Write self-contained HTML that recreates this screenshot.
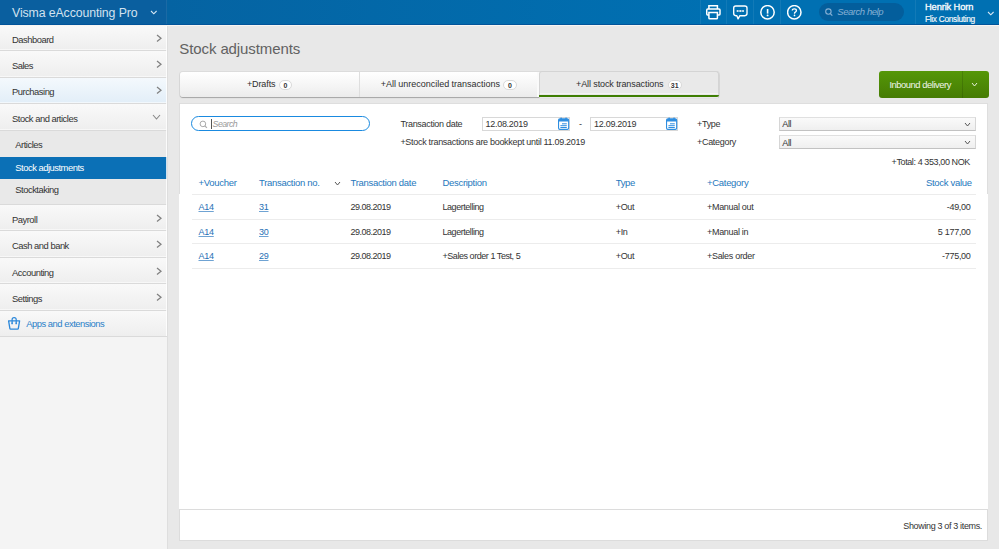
<!DOCTYPE html>
<html><head><meta charset="utf-8"><style>
*{box-sizing:border-box;margin:0;padding:0}
html,body{width:999px;height:549px;overflow:hidden}
body{font-family:"Liberation Sans",sans-serif;background:#e8e8e8;color:#333;position:relative}
.t{position:absolute;white-space:nowrap}
.b{position:absolute}
</style></head><body>
<div class="b" style="left:0px;top:0px;width:167px;height:24px;background:#0a5f9f"></div>
<div class="b" style="left:167px;top:0px;width:832px;height:24px;background:linear-gradient(to right,#0563a2,#0070b2 65%,#0070b2)"></div>
<div class="b" style="left:0px;top:24px;width:999px;height:1px;background:#02549a"></div>
<div class="b" style="left:0px;top:25px;width:999px;height:1px;background:#f7f5f2"></div>
<div class="t" style="left:12.00px;top:7.09px;font-size:12.3px;line-height:12.3px;color:#d2e2ef;letter-spacing:-0.1px;font-weight:normal;font-style:normal;">Visma eAccounting Pro</div>
<svg class="b" style="left:149.20px;top:9.10px" width="9.6" height="6.8" viewBox="0 0 9.6 6.8"><polyline points="2,2 4.8,4.8 7.6,2" fill="none" stroke="#d6e6f3" stroke-width="1.1"/></svg>
<div class="b" style="left:166px;top:0px;width:1px;height:24px;background:rgba(255,255,255,.07)"></div>
<div class="b" style="left:700px;top:0px;width:1px;height:24px;background:rgba(255,255,255,.07)"></div>
<div class="b" style="left:726px;top:0px;width:1px;height:24px;background:rgba(255,255,255,.07)"></div>
<div class="b" style="left:753px;top:0px;width:1px;height:24px;background:rgba(255,255,255,.07)"></div>
<div class="b" style="left:780px;top:0px;width:1px;height:24px;background:rgba(255,255,255,.07)"></div>
<div class="b" style="left:915px;top:0px;width:1px;height:24px;background:rgba(255,255,255,.07)"></div>
<svg class="b" style="left:705px;top:4px" width="17" height="17" viewBox="0 0 17 17">
 <path d="M3.9 5 V1.85 H12.4 V5" fill="none" stroke="#fff" stroke-width="1.5"/>
 <path d="M3.9 10.9 H2.6 Q1.75 10.9 1.75 10 V6 Q1.75 5.1 2.75 5.1 H14 Q15 5.1 15 6 V10 Q15 10.9 14.2 10.9 H12.4" fill="none" stroke="#fff" stroke-width="1.5"/>
 <path d="M3.9 8.4 H12.4 V14 Q12.4 14.75 11.6 14.75 H4.7 Q3.9 14.75 3.9 14 Z" fill="none" stroke="#fff" stroke-width="1.5"/>
</svg>
<svg class="b" style="left:732px;top:4px" width="17" height="17" viewBox="0 0 17 17">
 <path d="M3.8 1.95 H12.8 Q15 1.95 15 4.1 V9.6 Q15 11.7 12.8 11.7 H7.9 L6.1 14.9 L4.9 11.7 H3.8 Q1.7 11.7 1.7 9.6 V4.1 Q1.7 1.95 3.8 1.95 Z" fill="none" stroke="#fff" stroke-width="1.35" stroke-linejoin="round"/>
 <circle cx="5.5" cy="7" r="1" fill="#fff" opacity=".85"/><circle cx="8.3" cy="7" r="1" fill="#fff" opacity=".85"/><circle cx="11.1" cy="7" r="1" fill="#fff" opacity=".85"/>
 <path d="M5.5 7 H11.1" stroke="#fff" stroke-width=".9" opacity=".7"/>
</svg>
<svg class="b" style="left:760px;top:5px" width="16" height="16" viewBox="0 0 16 16">
 <circle cx="7.5" cy="7.3" r="6.7" fill="none" stroke="#fff" stroke-width="1.5"/>
 <path d="M7.6 4 V8.6" stroke="#fff" stroke-width="1.6"/><circle cx="7.6" cy="10.4" r=".95" fill="#fff"/>
</svg>
<svg class="b" style="left:787px;top:5px" width="16" height="16" viewBox="0 0 16 16">
 <circle cx="7.3" cy="7.3" r="6.7" fill="none" stroke="#fff" stroke-width="1.5"/>
 <path d="M5.3 5.6 Q5.3 3.9 7.3 3.9 Q9.4 3.9 9.4 5.6 Q9.4 6.6 8.3 7.2 Q7.5 7.6 7.5 8.7" fill="none" stroke="#fff" stroke-width="1.3"/><circle cx="7.5" cy="10.4" r=".85" fill="#fff"/>
</svg>
<div class="b" style="left:818.5px;top:3px;width:85.5px;height:18px;background:#035e9c;border-radius:9px"></div>
<svg class="b" style="left:824px;top:7px" width="10" height="10" viewBox="0 0 10 10"><circle cx="4.4" cy="4.6" r="2.7" fill="none" stroke="#86b0d4" stroke-width="1.1"/><path d="M6.3 6.6 L8.3 8.6" stroke="#86b0d4" stroke-width="1.2"/></svg>
<div class="t" style="left:837.30px;top:7.46px;font-size:9.5px;line-height:9.5px;color:#86b0d4;letter-spacing:-0.45px;font-weight:normal;font-style:italic;">Search help</div>
<div class="t" style="left:925.00px;top:3.23px;font-size:9.3px;line-height:9.3px;color:#fff;letter-spacing:-0.12px;font-weight:normal;font-style:normal;-webkit-text-stroke:0.3px #fff">Henrik Horn</div>
<div class="t" style="left:925.00px;top:14.77px;font-size:8.3px;line-height:8.3px;color:#f4f8fb;letter-spacing:-0.3px;font-weight:normal;font-style:normal;-webkit-text-stroke:0.15px #fff">Flix Consluting</div>
<svg class="b" style="left:985.70px;top:10.10px" width="9.6" height="6.8" viewBox="0 0 9.6 6.8"><polyline points="2,2 4.8,4.8 7.6,2" fill="none" stroke="#d6e6f3" stroke-width="1.1"/></svg>
<div class="b" style="left:0px;top:26px;width:167px;height:523px;background:#f4f4f4"></div>
<div class="b" style="left:167px;top:26px;width:1px;height:523px;background:#dedede"></div>
<div class="b" style="left:0px;top:26px;width:167px;height:24px;background:linear-gradient(#f9f9f9,#eeeeee)"></div>
<div class="b" style="left:0px;top:49px;width:166px;height:1px;background:rgba(255,255,255,.55)"></div>
<div class="b" style="left:0px;top:50px;width:167px;height:1px;background:#dadada"></div>
<div class="t" style="left:12.00px;top:34.74px;font-size:9.4px;line-height:9.4px;color:#333;letter-spacing:-0.48px;font-weight:normal;font-style:normal;">Dashboard</div>
<svg class="b" style="left:155.00px;top:33.10px" width="8" height="10.4" viewBox="0 0 8 10.4"><polyline points="2,2 6,5.2 2,8.4" fill="none" stroke="#808080" stroke-width="1.25"/></svg>
<div class="b" style="left:0px;top:51px;width:167px;height:26px;background:linear-gradient(#f9f9f9,#eeeeee)"></div>
<div class="b" style="left:0px;top:76px;width:166px;height:1px;background:rgba(255,255,255,.55)"></div>
<div class="b" style="left:0px;top:77px;width:167px;height:1px;background:#dadada"></div>
<div class="t" style="left:12.00px;top:60.94px;font-size:9.4px;line-height:9.4px;color:#333;letter-spacing:-0.48px;font-weight:normal;font-style:normal;">Sales</div>
<svg class="b" style="left:155.00px;top:59.30px" width="8" height="10.4" viewBox="0 0 8 10.4"><polyline points="2,2 6,5.2 2,8.4" fill="none" stroke="#808080" stroke-width="1.25"/></svg>
<div class="b" style="left:0px;top:78px;width:167px;height:25px;background:linear-gradient(#f4f9fd,#e2eef8)"></div>
<div class="b" style="left:0px;top:102px;width:166px;height:1px;background:rgba(255,255,255,.55)"></div>
<div class="b" style="left:0px;top:103px;width:167px;height:1px;background:#dadada"></div>
<div class="t" style="left:12.00px;top:86.74px;font-size:9.4px;line-height:9.4px;color:#333;letter-spacing:-0.48px;font-weight:normal;font-style:normal;">Purchasing</div>
<svg class="b" style="left:155.00px;top:85.10px" width="8" height="10.4" viewBox="0 0 8 10.4"><polyline points="2,2 6,5.2 2,8.4" fill="none" stroke="#808080" stroke-width="1.25"/></svg>
<div class="b" style="left:0px;top:104px;width:167px;height:26px;background:linear-gradient(#f9f9f9,#eeeeee)"></div>
<div class="b" style="left:0px;top:129px;width:166px;height:1px;background:rgba(255,255,255,.55)"></div>
<div class="b" style="left:0px;top:130px;width:167px;height:1px;background:#dadada"></div>
<div class="t" style="left:12.00px;top:113.74px;font-size:9.4px;line-height:9.4px;color:#333;letter-spacing:-0.48px;font-weight:normal;font-style:normal;">Stock and articles</div>
<svg class="b" style="left:151.30px;top:113.00px" width="11" height="8" viewBox="0 0 11 8"><polyline points="2,2 5.5,6 9,2" fill="none" stroke="#888" stroke-width="1.1"/></svg>
<div class="b" style="left:0px;top:205px;width:167px;height:25px;background:linear-gradient(#f9f9f9,#eeeeee)"></div>
<div class="b" style="left:0px;top:229px;width:166px;height:1px;background:rgba(255,255,255,.55)"></div>
<div class="b" style="left:0px;top:230px;width:167px;height:1px;background:#dadada"></div>
<div class="t" style="left:12.00px;top:214.74px;font-size:9.4px;line-height:9.4px;color:#333;letter-spacing:-0.48px;font-weight:normal;font-style:normal;">Payroll</div>
<svg class="b" style="left:155.00px;top:213.10px" width="8" height="10.4" viewBox="0 0 8 10.4"><polyline points="2,2 6,5.2 2,8.4" fill="none" stroke="#808080" stroke-width="1.25"/></svg>
<div class="b" style="left:0px;top:231px;width:167px;height:26px;background:linear-gradient(#f9f9f9,#eeeeee)"></div>
<div class="b" style="left:0px;top:256px;width:166px;height:1px;background:rgba(255,255,255,.55)"></div>
<div class="b" style="left:0px;top:257px;width:167px;height:1px;background:#dadada"></div>
<div class="t" style="left:12.00px;top:240.74px;font-size:9.4px;line-height:9.4px;color:#333;letter-spacing:-0.48px;font-weight:normal;font-style:normal;">Cash and bank</div>
<svg class="b" style="left:155.00px;top:239.10px" width="8" height="10.4" viewBox="0 0 8 10.4"><polyline points="2,2 6,5.2 2,8.4" fill="none" stroke="#808080" stroke-width="1.25"/></svg>
<div class="b" style="left:0px;top:258px;width:167px;height:25px;background:linear-gradient(#f9f9f9,#eeeeee)"></div>
<div class="b" style="left:0px;top:282px;width:166px;height:1px;background:rgba(255,255,255,.55)"></div>
<div class="b" style="left:0px;top:283px;width:167px;height:1px;background:#dadada"></div>
<div class="t" style="left:12.00px;top:267.74px;font-size:9.4px;line-height:9.4px;color:#333;letter-spacing:-0.48px;font-weight:normal;font-style:normal;">Accounting</div>
<svg class="b" style="left:155.00px;top:266.10px" width="8" height="10.4" viewBox="0 0 8 10.4"><polyline points="2,2 6,5.2 2,8.4" fill="none" stroke="#808080" stroke-width="1.25"/></svg>
<div class="b" style="left:0px;top:284px;width:167px;height:26px;background:linear-gradient(#f9f9f9,#eeeeee)"></div>
<div class="b" style="left:0px;top:309px;width:166px;height:1px;background:rgba(255,255,255,.55)"></div>
<div class="b" style="left:0px;top:310px;width:167px;height:1px;background:#dadada"></div>
<div class="t" style="left:12.00px;top:293.74px;font-size:9.4px;line-height:9.4px;color:#333;letter-spacing:-0.48px;font-weight:normal;font-style:normal;">Settings</div>
<svg class="b" style="left:155.00px;top:292.10px" width="8" height="10.4" viewBox="0 0 8 10.4"><polyline points="2,2 6,5.2 2,8.4" fill="none" stroke="#808080" stroke-width="1.25"/></svg>
<div class="b" style="left:0px;top:131px;width:167px;height:73px;background:#e9e9e9"></div>
<div class="b" style="left:0px;top:204px;width:167px;height:1px;background:#dadada"></div>
<div class="b" style="left:0px;top:157px;width:167px;height:22px;background:#0b70b6"></div>
<div class="t" style="left:15.30px;top:140.24px;font-size:9.4px;line-height:9.4px;color:#333;letter-spacing:-0.48px;font-weight:normal;font-style:normal;">Articles</div>
<div class="t" style="left:15.30px;top:162.74px;font-size:9.4px;line-height:9.4px;color:#fff;letter-spacing:-0.48px;font-weight:normal;font-style:normal;">Stock adjustments</div>
<div class="t" style="left:15.30px;top:185.24px;font-size:9.4px;line-height:9.4px;color:#333;letter-spacing:-0.48px;font-weight:normal;font-style:normal;">Stocktaking</div>
<div class="b" style="left:0px;top:311px;width:167px;height:25px;background:linear-gradient(#f9f9f9,#eeeeee)"></div>
<div class="b" style="left:0px;top:336px;width:167px;height:1px;background:#dadada"></div>
<div class="b" style="left:166px;top:26px;width:1px;height:310px;background:rgba(255,255,255,.8)"></div>
<svg class="b" style="left:4px;top:312px" width="20" height="22" viewBox="0 0 20 22"><path d="M4.6 8.85 H15.6 L14.3 16.6 Q14.2 17.1 13.6 17.1 H6.6 Q6 17.1 5.9 16.6 Z" fill="none" stroke="#2a87da" stroke-width="1.3" stroke-linejoin="round"/><path d="M8.1 11.3 V7.6 A2.05 2.05 0 0 1 12.2 7.6 V11.3" fill="none" stroke="#2a87da" stroke-width="1.2"/><circle cx="8.1" cy="11.4" r=".85" fill="#2a87da"/><circle cx="12.2" cy="11.4" r=".85" fill="#2a87da"/></svg>
<div class="t" style="left:26.30px;top:319.14px;font-size:9.4px;line-height:9.4px;color:#2a80c8;letter-spacing:-0.48px;font-weight:normal;font-style:normal;">Apps and extensions</div>
<div class="t" style="left:179.30px;top:41.30px;font-size:15px;line-height:15px;color:#626262;letter-spacing:-0.1px;font-weight:normal;font-style:normal;">Stock adjustments</div>
<div class="b" style="left:179.5px;top:71.5px;width:539px;height:25.5px;background:linear-gradient(#ffffff,#f4f4f4 60%,#ececec);border-radius:3px;box-shadow:0 0 0 1px rgba(0,0,0,.05),0 1px 1px rgba(0,0,0,.25)"></div>
<div class="b" style="left:359px;top:72px;width:1px;height:25px;background:#dedede"></div>
<div class="b" style="left:537px;top:72px;width:1.5px;height:25px;background:#fafafa"></div>
<div class="b" style="left:538.5px;top:71px;width:180px;height:26.5px;background:#e9e9e9;border:1px solid #d4d4d4;border-bottom:none;border-radius:3px 3px 0 0"></div>
<div class="b" style="left:539.5px;top:92.5px;width:178px;height:1px;background:#f3f3f3"></div>
<div class="b" style="left:538.5px;top:94.7px;width:180px;height:2.5px;background:#3f7e03;border-radius:0 0 3px 0"></div>
<div class="t" style="left:246.90px;top:80.28px;font-size:9px;line-height:9px;color:#2e2e2e;letter-spacing:-0.1px;font-weight:normal;font-style:normal;">+Drafts</div>
<div class="b" style="left:278.7px;top:79.6px;width:13.6px;height:10px;border:1px solid #d9d9d9;border-radius:5px;background:#fff"></div>
<div class="t" style="left:285.50px;top:81.77px;font-size:7px;line-height:7px;color:#333;letter-spacing:0px;font-weight:bold;font-style:normal;transform:translateX(-50%)">0</div>
<div class="t" style="left:380.70px;top:80.28px;font-size:9px;line-height:9px;color:#2e2e2e;letter-spacing:-0.02px;font-weight:normal;font-style:normal;">+All unreconciled transactions</div>
<div class="b" style="left:503px;top:79.6px;width:14px;height:10px;border:1px solid #d9d9d9;border-radius:5px;background:#fff"></div>
<div class="t" style="left:510.00px;top:81.77px;font-size:7px;line-height:7px;color:#333;letter-spacing:0px;font-weight:bold;font-style:normal;transform:translateX(-50%)">0</div>
<div class="t" style="left:576.00px;top:80.28px;font-size:9px;line-height:9px;color:#2e2e2e;letter-spacing:-0.1px;font-weight:normal;font-style:normal;">+All stock transactions</div>
<div class="b" style="left:668px;top:79.6px;width:13.5px;height:10px;border:1px solid #d9d9d9;border-radius:5px;background:#fff"></div>
<div class="t" style="left:674.75px;top:81.77px;font-size:7px;line-height:7px;color:#333;letter-spacing:0px;font-weight:bold;font-style:normal;transform:translateX(-50%)">31</div>
<div class="b" style="left:879px;top:71px;width:110px;height:26.5px;background:linear-gradient(#559708,#467c04);border-radius:3px"></div>
<div class="b" style="left:961.5px;top:71px;width:1px;height:26.5px;background:rgba(0,0,0,.13)"></div>
<div class="t" style="left:889.40px;top:80.14px;font-size:9.4px;line-height:9.4px;color:#f0f6ea;letter-spacing:-0.45px;font-weight:normal;font-style:normal;">Inbound delivery</div>
<svg class="b" style="left:970.20px;top:81.20px" width="9" height="7" viewBox="0 0 9 7"><polyline points="2,2 4.5,5 7,2" fill="none" stroke="#e6f0da" stroke-width="1.0"/></svg>
<div class="b" style="left:179px;top:103px;width:809.4px;height:406px;background:#fff"></div>
<div class="b" style="left:179px;top:103px;width:809.4px;height:91px;border:1px solid #dedede;border-bottom:none"></div>
<div class="b" style="left:179px;top:509px;width:809.4px;height:31.5px;background:#fff;border:1px solid #dcdcdc"></div>
<div class="b" style="left:191.3px;top:116.2px;width:178.5px;height:14.7px;border:1.6px solid #1a8ae0;border-radius:8px;background:#fff"></div>
<svg class="b" style="left:199px;top:119.5px" width="9" height="9" viewBox="0 0 9 9"><circle cx="3.9" cy="3.9" r="2.8" fill="none" stroke="#aaa" stroke-width="1"/><path d="M5.9 5.9 L7.9 7.9" stroke="#aaa" stroke-width="1.1"/></svg>
<div class="b" style="left:210.5px;top:119px;width:1px;height:9.8px;background:#555"></div>
<div class="t" style="left:212.60px;top:120.25px;font-size:8.8px;line-height:8.8px;color:#9a9a9a;letter-spacing:-0.55px;font-weight:normal;font-style:italic;">Search</div>
<div class="t" style="left:400.40px;top:119.68px;font-size:9px;line-height:9px;color:#333;letter-spacing:-0.3px;font-weight:normal;font-style:normal;">Transaction date</div>
<div class="b" style="left:481.5px;top:116.5px;width:88px;height:14px;border:1px solid #d8d8d8;background:#fff"></div>
<div class="t" style="left:485.60px;top:119.68px;font-size:9px;line-height:9px;color:#333;letter-spacing:-0.3px;font-weight:normal;font-style:normal;">12.08.2019</div>
<svg class="b" style="left:557.6px;top:117.3px" width="12" height="13" viewBox="0 0 12 13"><rect x="0.55" y="1.9" width="10.1" height="10.5" rx="1.3" fill="#fff" stroke="#2f8ee0" stroke-width="1.1"/><path d="M0.55 4.6 V3.2 Q0.55 1.9 1.85 1.9 H9.35 Q10.65 1.9 10.65 3.2 V4.6 Z" fill="#2f8ee0"/><rect x="2.4" y="0.5" width="1.5" height="2.6" rx=".5" fill="#2f8ee0"/><rect x="7.3" y="0.5" width="1.5" height="2.6" rx=".5" fill="#2f8ee0"/><path d="M4 6.8 H8.8 M2.4 8.7 H8.8 M2.4 10.5 H8.8" stroke="#2f8ee0" stroke-width="1"/></svg>
<div class="t" style="left:579.00px;top:119.68px;font-size:9px;line-height:9px;color:#333;letter-spacing:0px;font-weight:normal;font-style:normal;">-</div>
<div class="b" style="left:590px;top:116.5px;width:88px;height:14px;border:1px solid #d8d8d8;background:#fff"></div>
<div class="t" style="left:594.10px;top:119.68px;font-size:9px;line-height:9px;color:#333;letter-spacing:-0.3px;font-weight:normal;font-style:normal;">12.09.2019</div>
<svg class="b" style="left:666.1px;top:117.3px" width="12" height="13" viewBox="0 0 12 13"><rect x="0.55" y="1.9" width="10.1" height="10.5" rx="1.3" fill="#fff" stroke="#2f8ee0" stroke-width="1.1"/><path d="M0.55 4.6 V3.2 Q0.55 1.9 1.85 1.9 H9.35 Q10.65 1.9 10.65 3.2 V4.6 Z" fill="#2f8ee0"/><rect x="2.4" y="0.5" width="1.5" height="2.6" rx=".5" fill="#2f8ee0"/><rect x="7.3" y="0.5" width="1.5" height="2.6" rx=".5" fill="#2f8ee0"/><path d="M4 6.8 H8.8 M2.4 8.7 H8.8 M2.4 10.5 H8.8" stroke="#2f8ee0" stroke-width="1"/></svg>
<div class="t" style="left:400.40px;top:138.48px;font-size:9px;line-height:9px;color:#333;letter-spacing:-0.3px;font-weight:normal;font-style:normal;">+Stock transactions are bookkept until 11.09.2019</div>
<div class="t" style="left:697.00px;top:119.68px;font-size:9px;line-height:9px;color:#333;letter-spacing:-0.3px;font-weight:normal;font-style:normal;">+Type</div>
<div class="t" style="left:697.00px;top:138.48px;font-size:9px;line-height:9px;color:#333;letter-spacing:-0.3px;font-weight:normal;font-style:normal;">+Category</div>
<div class="b" style="left:779px;top:117px;width:196.5px;height:13.8px;border:1px solid #d6d6d6;border-bottom-color:#c2c2c2;border-top-color:#e0e0e0;background:linear-gradient(#fafafa,#efefef)"></div>
<div class="t" style="left:782.20px;top:120.48px;font-size:9px;line-height:9px;color:#333;letter-spacing:-0.3px;font-weight:normal;font-style:normal;">All</div>
<svg class="b" style="left:962.50px;top:120.80px" width="9" height="7" viewBox="0 0 9 7"><polyline points="2,2 4.5,5 7,2" fill="none" stroke="#555" stroke-width="1.0"/></svg>
<div class="b" style="left:779px;top:135.3px;width:196.5px;height:13.8px;border:1px solid #d6d6d6;border-bottom-color:#c2c2c2;border-top-color:#e0e0e0;background:linear-gradient(#fafafa,#efefef)"></div>
<div class="t" style="left:782.20px;top:138.78px;font-size:9px;line-height:9px;color:#333;letter-spacing:-0.3px;font-weight:normal;font-style:normal;">All</div>
<svg class="b" style="left:962.50px;top:139.10px" width="9" height="7" viewBox="0 0 9 7"><polyline points="2,2 4.5,5 7,2" fill="none" stroke="#555" stroke-width="1.0"/></svg>
<div class="t" style="right:29.10px;top:157.68px;font-size:9px;line-height:9px;color:#333;letter-spacing:-0.4px;font-weight:normal;font-style:normal;">+Total: 4 353,00 NOK</div>
<div class="t" style="left:198.50px;top:178.46px;font-size:9.5px;line-height:9.5px;color:#2678bd;letter-spacing:-0.3px;font-weight:normal;font-style:normal;">+Voucher</div>
<div class="t" style="left:259.00px;top:178.46px;font-size:9.5px;line-height:9.5px;color:#2678bd;letter-spacing:-0.3px;font-weight:normal;font-style:normal;">Transaction no.</div>
<div class="t" style="left:350.50px;top:178.46px;font-size:9.5px;line-height:9.5px;color:#2678bd;letter-spacing:-0.3px;font-weight:normal;font-style:normal;">Transaction date</div>
<div class="t" style="left:442.50px;top:178.46px;font-size:9.5px;line-height:9.5px;color:#2678bd;letter-spacing:-0.3px;font-weight:normal;font-style:normal;">Description</div>
<div class="t" style="left:615.70px;top:178.46px;font-size:9.5px;line-height:9.5px;color:#2678bd;letter-spacing:-0.3px;font-weight:normal;font-style:normal;">Type</div>
<div class="t" style="left:707.00px;top:178.46px;font-size:9.5px;line-height:9.5px;color:#2678bd;letter-spacing:-0.3px;font-weight:normal;font-style:normal;">+Category</div>
<div class="t" style="right:27.30px;top:178.46px;font-size:9.5px;line-height:9.5px;color:#2678bd;letter-spacing:-0.3px;font-weight:normal;font-style:normal;">Stock value</div>
<svg class="b" style="left:332.50px;top:179.50px" width="9" height="7" viewBox="0 0 9 7"><polyline points="2,2 4.5,5 7,2" fill="none" stroke="#555" stroke-width="1.0"/></svg>
<div class="b" style="left:192px;top:193.5px;width:784px;height:1px;background:#ececec"></div>
<div class="b" style="left:192px;top:218.5px;width:784px;height:1px;background:#ececec"></div>
<div class="b" style="left:192px;top:243px;width:784px;height:1px;background:#ececec"></div>
<div class="b" style="left:192px;top:267.5px;width:784px;height:1px;background:#ececec"></div>
<div class="t" style="left:198.50px;top:203.08px;font-size:9px;line-height:9px;color:#1f6fb5;letter-spacing:-0.25px;font-weight:normal;font-style:normal;text-decoration:underline;text-decoration-color:#6fa3d3;text-underline-offset:1px">A14</div>
<div class="t" style="left:259.00px;top:203.08px;font-size:9px;line-height:9px;color:#1f6fb5;letter-spacing:-0.25px;font-weight:normal;font-style:normal;text-decoration:underline;text-decoration-color:#6fa3d3;text-underline-offset:1px">31</div>
<div class="t" style="left:350.50px;top:203.08px;font-size:9px;line-height:9px;color:#333;letter-spacing:-0.5px;font-weight:normal;font-style:normal;">29.08.2019</div>
<div class="t" style="left:442.50px;top:203.08px;font-size:9px;line-height:9px;color:#333;letter-spacing:-0.45px;font-weight:normal;font-style:normal;">Lagertelling</div>
<div class="t" style="left:615.70px;top:203.08px;font-size:9px;line-height:9px;color:#333;letter-spacing:-0.3px;font-weight:normal;font-style:normal;">+Out</div>
<div class="t" style="left:707.00px;top:203.08px;font-size:9px;line-height:9px;color:#333;letter-spacing:-0.3px;font-weight:normal;font-style:normal;">+Manual out</div>
<div class="t" style="right:28.50px;top:203.08px;font-size:9px;line-height:9px;color:#333;letter-spacing:-0.3px;font-weight:normal;font-style:normal;">-49,00</div>
<div class="t" style="left:198.50px;top:227.58px;font-size:9px;line-height:9px;color:#1f6fb5;letter-spacing:-0.25px;font-weight:normal;font-style:normal;text-decoration:underline;text-decoration-color:#6fa3d3;text-underline-offset:1px">A14</div>
<div class="t" style="left:259.00px;top:227.58px;font-size:9px;line-height:9px;color:#1f6fb5;letter-spacing:-0.25px;font-weight:normal;font-style:normal;text-decoration:underline;text-decoration-color:#6fa3d3;text-underline-offset:1px">30</div>
<div class="t" style="left:350.50px;top:227.58px;font-size:9px;line-height:9px;color:#333;letter-spacing:-0.5px;font-weight:normal;font-style:normal;">29.08.2019</div>
<div class="t" style="left:442.50px;top:227.58px;font-size:9px;line-height:9px;color:#333;letter-spacing:-0.45px;font-weight:normal;font-style:normal;">Lagertelling</div>
<div class="t" style="left:615.70px;top:227.58px;font-size:9px;line-height:9px;color:#333;letter-spacing:-0.3px;font-weight:normal;font-style:normal;">+In</div>
<div class="t" style="left:707.00px;top:227.58px;font-size:9px;line-height:9px;color:#333;letter-spacing:-0.3px;font-weight:normal;font-style:normal;">+Manual in</div>
<div class="t" style="right:28.50px;top:227.58px;font-size:9px;line-height:9px;color:#333;letter-spacing:-0.3px;font-weight:normal;font-style:normal;">5 177,00</div>
<div class="t" style="left:198.50px;top:252.08px;font-size:9px;line-height:9px;color:#1f6fb5;letter-spacing:-0.25px;font-weight:normal;font-style:normal;text-decoration:underline;text-decoration-color:#6fa3d3;text-underline-offset:1px">A14</div>
<div class="t" style="left:259.00px;top:252.08px;font-size:9px;line-height:9px;color:#1f6fb5;letter-spacing:-0.25px;font-weight:normal;font-style:normal;text-decoration:underline;text-decoration-color:#6fa3d3;text-underline-offset:1px">29</div>
<div class="t" style="left:350.50px;top:252.08px;font-size:9px;line-height:9px;color:#333;letter-spacing:-0.5px;font-weight:normal;font-style:normal;">29.08.2019</div>
<div class="t" style="left:442.50px;top:252.08px;font-size:9px;line-height:9px;color:#333;letter-spacing:-0.45px;font-weight:normal;font-style:normal;">+Sales order 1 Test, 5</div>
<div class="t" style="left:615.70px;top:252.08px;font-size:9px;line-height:9px;color:#333;letter-spacing:-0.3px;font-weight:normal;font-style:normal;">+Out</div>
<div class="t" style="left:707.00px;top:252.08px;font-size:9px;line-height:9px;color:#333;letter-spacing:-0.3px;font-weight:normal;font-style:normal;">+Sales order</div>
<div class="t" style="right:28.50px;top:252.08px;font-size:9px;line-height:9px;color:#333;letter-spacing:-0.3px;font-weight:normal;font-style:normal;">-775,00</div>
<div class="t" style="right:17.00px;top:521.88px;font-size:9px;line-height:9px;color:#333;letter-spacing:-0.35px;font-weight:normal;font-style:normal;">Showing 3 of 3 items.</div>
</body></html>
